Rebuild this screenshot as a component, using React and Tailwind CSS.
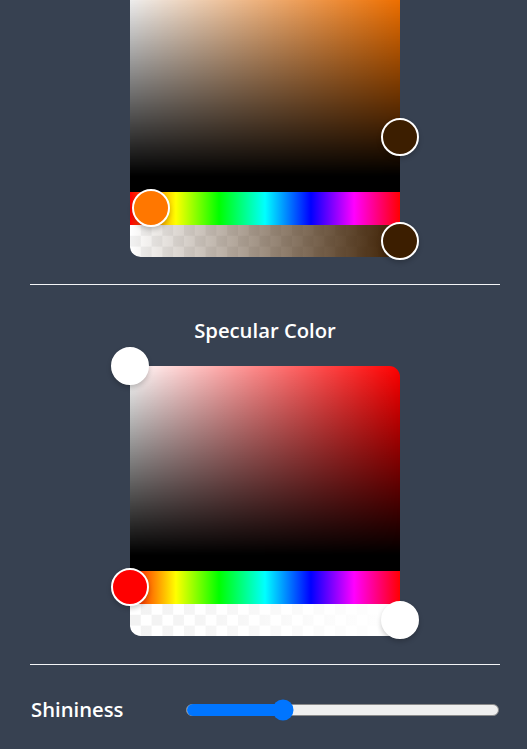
import React from "react";

const hueBg =
  "bg-[linear-gradient(to_right,#f00_0%,#ff0_17%,#0f0_33%,#0ff_50%,#00f_67%,#f0f_83%,#f00_100%)]";
const checker =
  "bg-[conic-gradient(#f2f2f2_25%,#fff_0_50%,#f2f2f2_0_75%,#fff_0)] bg-[length:21.6px_21.6px]";

// round handle, placed on the picker canvas by percent
const Pointer = ({ x, y, color }) => (
  <div
    className="absolute z-10 w-[38px] h-[38px] -translate-x-1/2 -translate-y-1/2 rounded-full border-[2.7px] border-white shadow-[0_2.7px_5.4px_rgba(0,0,0,0.2)]"
    style={{ left: x + "%", top: y + "%", backgroundColor: color }}
  />
);

const ColorPicker = ({ satClass, alphaClass, color, sat, hue, alpha, className = "" }) => {
  return (
    <div className={"w-[270px] h-[270px] flex flex-col mx-auto " + className}>
      <div className={"relative grow rounded-t-[10.8px] border-b-[16.2px] border-black " + satClass}>
        <Pointer x={sat.x} y={sat.y} color={color} />
      </div>
      <div className={"relative h-[32.4px] " + hueBg}>
        <Pointer x={hue.x} y={50} color={hue.color} />
      </div>
      <div className={"relative h-[32.4px] rounded-b-[10.8px] " + checker}>
        <div className={"absolute inset-0 rounded-b-[10.8px] " + alphaClass} />
        <Pointer x={alpha} y={50} color={color} />
      </div>
    </div>
  );
};

export default function App() {
  return (
    <div
      className="w-full h-[749px] overflow-hidden bg-[#374151] pl-[30px] pr-[27px] text-white"
      style={{ fontFamily: "'Open Sans', 'Noto Sans', sans-serif" }}
    >
      <ColorPicker
        className="-mt-[13px]"
        satClass="bg-[linear-gradient(to_top,#000,rgba(0,0,0,0)),linear-gradient(to_right,#fff,rgba(255,255,255,0)),linear-gradient(#ff7700,#ff7700)]"
        alphaClass="bg-[linear-gradient(90deg,rgba(60,30,0,0),rgba(60,30,0,1))]"
        color="#3c1e00"
        sat={{ x: 100, y: 79.5 }}
        hue={{ x: 7.8, color: "#ff7700" }}
        alpha={100}
      />

      <div className="mt-[27px] h-px bg-gray-100" />

      <h3 className="mt-[31px] mb-[22px] text-center text-[20.25px] leading-[28px] font-semibold">
        Specular Color
      </h3>

      <ColorPicker
        satClass="bg-[linear-gradient(to_top,#000,rgba(0,0,0,0)),linear-gradient(to_right,#fff,rgba(255,255,255,0)),linear-gradient(#f00,#f00)]"
        alphaClass="bg-[linear-gradient(90deg,rgba(255,255,255,0),rgba(255,255,255,1))]"
        color="#ffffff"
        sat={{ x: 0, y: 0 }}
        hue={{ x: 0, color: "#ff0000" }}
        alpha={100}
      />

      <div className="mt-[28px] h-px bg-gray-100" />

      <div className="mt-[31px] flex items-center h-[27px]">
        <span className="w-[156px] shrink-0 pl-px text-[20.25px] leading-[27px] font-semibold">
          Shininess
        </span>
        <div className="relative flex-1 h-[12px] mr-px rounded-full border border-[#8a8a8a] bg-[#efefef]">
          <div className="absolute left-0 top-[-1px] bottom-[-1px] w-[31%] rounded-l-full bg-[#0075ff]" />
          <div className="absolute left-[31%] top-1/2 w-[21px] h-[21px] -translate-x-1/2 -translate-y-1/2 rounded-full bg-[#0075ff]" />
        </div>
      </div>
    </div>
  );
}
